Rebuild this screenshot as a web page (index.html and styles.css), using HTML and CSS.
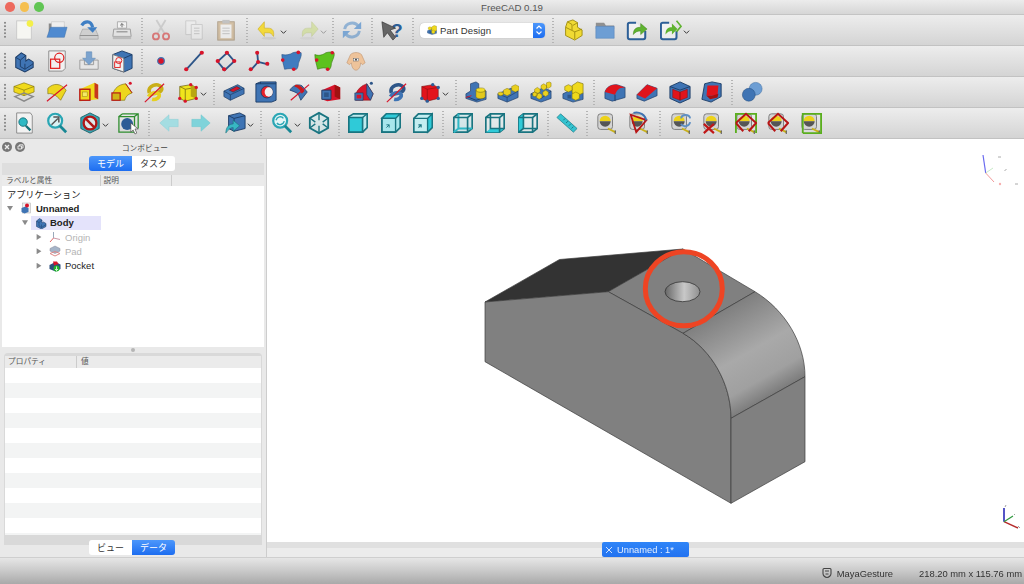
FILE: index.html
```html
<!DOCTYPE html>
<html lang="ja">
<head>
<meta charset="utf-8">
<title>FreeCAD 0.19</title>
<link rel="stylesheet" href="styles.css">
</head>
<body>
<svg class="defs" aria-hidden="true">
  <defs>
    <linearGradient id="curve" gradientUnits="userSpaceOnUse" x1="719" y1="312" x2="768" y2="398">
      <stop offset="0" stop-color="#7f7f7f"/><stop offset=".5" stop-color="#a9a9a9"/><stop offset=".8" stop-color="#a0a0a0"/><stop offset="1" stop-color="#7b7b7b"/>
    </linearGradient>
    <linearGradient id="bore" x1="0" x2="1" y1="0" y2="0">
      <stop offset="0" stop-color="#666"/><stop offset=".2" stop-color="#8a8a8a"/><stop offset=".55" stop-color="#c8c8c8"/><stop offset="1" stop-color="#8f8f8f"/>
    </linearGradient>
  </defs>
  <symbol id="new" viewBox="0 0 24 24"><rect x="4" y="2" width="16" height="20" fill="#f6f6f2" stroke="#c9c9c9"/><circle cx="18.500" cy="5" r="3.600" fill="#f4f04a"/></symbol>
  <symbol id="open" viewBox="0 0 24 24"><path d="M3 5h6l2 2h9v12H3z" fill="#8a8a8a"/><path d="M6 3h14v8H6z" fill="#eee" stroke="#bbb" stroke-width=".5"/><path d="M5 9h18l-3 11H1z" fill="#4f8ad0" stroke="#3a6da8" stroke-width=".5"/></symbol>
  <symbol id="save" viewBox="0 0 24 24"><path d="M5 11h14l3 7v4H2v-4z" fill="#cfcfcf" stroke="#999" stroke-width=".6"/><path d="M2 18h20" stroke="#8c8c8c"/><path d="M4 7c3-5 10-6 12 2" fill="none" stroke="#3f7fc4" stroke-width="3.400"/><path d="M10 9h11l-5 6z" fill="#3f7fc4"/></symbol>
  <symbol id="print" viewBox="0 0 24 24"><path d="M7 3h10v7H7z" fill="#f3f3f3" stroke="#aaa"/><path d="M3 11h18l1 8H2z" fill="#e2e2e2" stroke="#999"/><path d="M2 19h20v3H2z" fill="#bbb"/><path d="M6 14h12" stroke="#777"/><path d="M12 9V5m-2 2l2-2 2 2" stroke="#666" fill="none"/></symbol>
  <symbol id="cut" viewBox="0 0 24 24"><g opacity=".62"><path d="M7 1l9 15M17 1L8 16" stroke="#bcbcbc" stroke-width="2"/><circle cx="6.500" cy="19" r="3.300" fill="none" stroke="#d43a3a" stroke-width="2"/><circle cx="17.500" cy="19" r="3.300" fill="none" stroke="#d43a3a" stroke-width="2"/></g></symbol>
  <symbol id="copy" viewBox="0 0 24 24"><g opacity=".45" fill="#f3f3f3" stroke="#aaa"><path d="M3 2h11v15H3z"/><path d="M9 6h12v16H9z"/><path d="M12 10h6M12 13h6M12 16h6" stroke="#999"/></g></symbol>
  <symbol id="paste" viewBox="0 0 24 24"><g opacity=".6"><rect x="3" y="3" width="18" height="20" fill="#c7a77b" stroke="#8c7350"/><rect x="6" y="6" width="12" height="15" fill="#f4f4f4"/><rect x="8" y="1" width="8" height="4" fill="#aaa"/><path d="M8 10h8M8 13h8M8 16h8" stroke="#aaa"/></g></symbol>
  <symbol id="undo" viewBox="0 0 24 24"><ellipse cx="13" cy="21" rx="8" ry="1.500" fill="#ccc"/><path d="M8 10h4c5 0 7 3 6 9-2-3-3-4-6-4H8v4L1 11l7-8z" fill="#f2d93b" stroke="#c9a818" stroke-width=".6"/></symbol>
  <symbol id="redo" viewBox="0 0 24 24"><g opacity=".55"><ellipse cx="11" cy="21" rx="8" ry="1.500" fill="#ccc"/><path d="M16 10h-4c-5 0-7 3-6 9 2-3 3-4 6-4h4v4l7-8-7-8z" fill="#c9dc7c" stroke="#a8ba5c" stroke-width=".6"/></g></symbol>
  <symbol id="refresh" viewBox="0 0 24 24"><g opacity=".55" fill="none" stroke="#4f8ac6" stroke-width="3.200"><path d="M4 11c1-7 11-9 15-3"/><path d="M20 13c-1 7-11 9-15 3"/></g><path d="M22 3v8h-8zM2 21v-8h8z" fill="#7ba6d3"/></symbol>
  <symbol id="cursor" viewBox="0 0 24 24"><path d="M1 3l15 7-6 2 6 8-3 3-6-8-4 5z" fill="#666" stroke="#333" stroke-width=".7"/></symbol>
  <symbol id="part" viewBox="0 0 24 24"><path d="M7 3l6-2 5 3v5l5 3v6l-8 5-10-5v-9z" fill="#f0da33" stroke="#a08d10"/><path d="M5 9l10 5v8M15 14l8-3M7 3l5 3v6M13 7l5-3" fill="none" stroke="#a08d10"/></symbol>
  <symbol id="folder" viewBox="0 0 24 24"><path d="M2 4h9l2 3h9v4H2z" fill="#909090"/><path d="M2 8h20v13H2z" fill="#6d9ed4" stroke="#5784b8" stroke-width=".6"/></symbol>
  <symbol id="exp" viewBox="0 0 24 24"><path d="M11 4H4a2 2 0 0 0-2 2v14a2 2 0 0 0 2 2h15a2 2 0 0 0 2-2v-7" fill="#fff" fill-opacity=".5" stroke="#2d5f97" stroke-width="2.200"/><path d="M8 17c0-6 3-8 8-8V5l7 6-7 6v-4c-3 0-6 1-8 4z" fill="#5fb32f" stroke="#3c7d1b" stroke-width=".5"/></symbol>
  <symbol id="exp2" viewBox="0 0 24 24"><path d="M10 4H3a2 2 0 0 0-2 2v14a2 2 0 0 0 2 2h13a2 2 0 0 0 2-2v-7" fill="#fff" fill-opacity=".5" stroke="#2d5f97" stroke-width="2.200"/><path d="M6 17c0-6 3-8 7-8V5l6 6-6 6v-4c-3 0-5 1-7 4z" fill="#5fb32f"/><path d="M18 2l5 6-5 6" fill="none" stroke="#5fb32f" stroke-width="1.800"/></symbol>
  <symbol id="body" viewBox="0 0 24 24"><path d="M3 8l6-5 5 3v6l3-2 5 3v6l-9 5-10-5z" fill="#3f74b4" stroke="#1d3c66" stroke-width="1.100"/><path d="M3 8l5 3v7l5 3 9-6M8 11l6-5M13 21v-6" fill="none" stroke="#1d3c66"/></symbol>
  <symbol id="sketch" viewBox="0 0 24 24"><path d="M3 1h18v19l-3 3H3z" fill="#f1f1f1" stroke="#888"/><rect x="5" y="10" width="10" height="10" fill="none" stroke="#e01b1b" stroke-width="1.300"/><circle cx="14.500" cy="8.500" r="5" fill="none" stroke="#e01b1b" stroke-width="1.300"/></symbol>
  <symbol id="import" viewBox="0 0 24 24"><path d="M2 11v10h20V11h-5v5H7v-5z" fill="#e6e6e6" stroke="#999"/><path d="M9 2h6v7h4l-7 7-7-7h4z" fill="#7ba3cf" stroke="#5d87b3" stroke-width=".6"/></symbol>
  <symbol id="boxs" viewBox="0 0 24 24"><path d="M2 5l10-4 11 4v15l-9 4-12-4z" fill="#3f74b4" stroke="#1d3c66"/><path d="M2 5l12 4v15L2 20z" fill="#f1f1f1" stroke="#777"/><path d="M14 9l9-4" stroke="#1d3c66"/><rect x="4" y="13" width="6" height="6" fill="none" stroke="#e01b1b"/><circle cx="8.500" cy="11.500" r="3.300" fill="none" stroke="#e01b1b"/></symbol>
  <symbol id="point" viewBox="0 0 24 24"><circle cx="12" cy="12" r="3.600" fill="#d8142a" stroke="#3f74b4" stroke-width="1.300"/></symbol>
  <symbol id="line" viewBox="0 0 24 24"><path d="M3 22L21 2" stroke="#2d5588" stroke-width="2"/><circle cx="3.500" cy="21" r="2.300" fill="#d8142a"/><circle cx="20.500" cy="3" r="2.300" fill="#d8142a"/></symbol>
  <symbol id="rect" viewBox="0 0 24 24"><path d="M12 3l9 8-9 11-9-8z" transform="rotate(8 12 12)" fill="none" stroke="#2d5588" stroke-width="2"/><g fill="#d8142a"><circle cx="13" cy="3" r="2.300"/><circle cx="21" cy="12" r="2.300"/><circle cx="10" cy="21" r="2.300"/><circle cx="3" cy="12" r="2.300"/></g></symbol>
  <symbol id="axes" viewBox="0 0 24 24"><path d="M11 13L10 2M11 13l12 3M11 13l-8 9" stroke="#2d5588" stroke-width="2" fill="none"/><g fill="#d8142a"><circle cx="10" cy="3" r="2.200"/><circle cx="21" cy="15" r="2.200"/><circle cx="3" cy="21" r="2.200"/><circle cx="11" cy="13" r="2.200"/></g></symbol>
  <symbol id="surf" viewBox="0 0 24 24"><path d="M2 5c5 1 9 0 12-2 3-1 7-1 9 0 1 4-2 8-3 12 0 3-1 5-2 6-4-1-8-1-13 0-1-5-3-10-3-16z" fill="#3f7cc0" stroke="#2a5588" stroke-width=".7"/><g fill="#d8142a"><circle cx="20" cy="2.500" r="2"/><circle cx="3" cy="11" r="2"/><circle cx="15" cy="21" r="2"/></g></symbol>
  <symbol id="surfg" viewBox="0 0 24 24"><path d="M2 5c5 2 9 0 12-2 3-1 7-1 9 0 1 4-2 8-3 12 0 3-1 5-2 6-4-2-8-2-13 0-1-5-3-10-3-16z" fill="#5cc21e" stroke="#3a7d12" stroke-width=".7"/><g fill="#d8142a"><circle cx="21" cy="3" r="2"/><circle cx="4" cy="11" r="2"/><circle cx="16" cy="21" r="2"/></g></symbol>
  <symbol id="sheep" viewBox="0 0 24 24"><path d="M6 5c3-3 9-3 12 0l4 9-3 2-2-2c0 4-2 8-5 8s-5-4-5-8l-2 2-3-2z" fill="#eec39a" stroke="#bb8f6a" stroke-width=".6"/><rect x="9" y="9" width="6" height="3" fill="#f7f7f7" stroke="#555" stroke-width=".5"/><circle cx="12" cy="10.500" r="1" fill="#333"/></symbol>
  <symbol id="pad" viewBox="0 0 24 24"><path d="M1 6l11-4 11 4v6l-11 4-11-4z" fill="#f0da1c" stroke="#7f7210" stroke-width=".7"/><path d="M1 6l11 4 11-4M12 10v6" fill="none" stroke="#7f7210" stroke-width=".7"/><path d="M2 17l10-4 10 4-10 5z" fill="none" stroke="#888" stroke-width="1.500"/></symbol>
  <symbol id="rev" viewBox="0 0 24 24"><path d="M2 8c6-6 14-6 20 2l-6 11C11 15 6 13 2 14z" fill="#edd61e" stroke="#7f7210" stroke-width=".7"/><path d="M1 22L23 4" stroke="#d8142a" stroke-width="1.300"/></symbol>
  <symbol id="loft" viewBox="0 0 24 24"><path d="M2 9l16-7 4 2v16l-20 2z" fill="#efd91c"/><path d="M18 2l4 2v16l-4-2z" fill="#c7361f"/><rect x="2" y="9" width="11" height="12" fill="#efd91c" stroke="#b81616" stroke-width="1.500"/><rect x="5" y="12" width="5" height="5" fill="#f6ea66" stroke="#8a7a10" stroke-width=".5"/></symbol>
  <symbol id="pipe" viewBox="0 0 24 24"><path d="M2 14C4 8 8 4 16 3l7 10c-3 1-7 3-8 8l-13 0z" fill="#edd61e" stroke="#7f7210" stroke-width=".7"/><rect x="1" y="13" width="9" height="8" fill="#d0b416" stroke="#b81616" stroke-width="1.300"/><path d="M16 3l7 10" stroke="#b81616"/><circle cx="21" cy="2.500" r="1.700" fill="#d8142a"/></symbol>
  <symbol id="helix" viewBox="0 0 24 24"><path d="M7 13c-3-8 10-12 13-6 2 4-5 7-10 7" fill="none" stroke="#c9ae17" stroke-width="4"/><path d="M6 17c2-4 8-5 11-3 3 3-3 7-7 6" fill="none" stroke="#e6d020" stroke-width="4"/><path d="M2 23L23 3" stroke="#d8142a" stroke-width="1.300"/></symbol>
  <symbol id="ybox" viewBox="0 0 24 24"><path d="M3 6l12-2 6 3v12l-12 3-6-3z" fill="#f0e41c" stroke="#6f6410" stroke-width=".8"/><path d="M3 6l6 3v13M9 9l12-2" fill="none" stroke="#6f6410" stroke-width=".8"/><path d="M15 4l6 3v12l-6-2z" fill="#b9a612"/><g fill="#d8142a"><circle cx="3" cy="19" r="1.800"/><circle cx="9" cy="22" r="1.800"/><circle cx="21" cy="19" r="1.800"/><circle cx="21" cy="7" r="1.800"/><circle cx="15" cy="4" r="1.800"/></g></symbol>
  <symbol id="pock" viewBox="0 0 24 24"><path d="M1 11l15-7 7 4v6l-15 7-7-4z" fill="#3f74b4" stroke="#1d3c66" stroke-width=".8"/><path d="M1 11l7 4 15-7M8 15v6" fill="none" stroke="#1d3c66" stroke-width=".8"/><path d="M7 10l8-4 4 2-8 4z" fill="#d8142a" stroke="#222" stroke-width=".5"/></symbol>
  <symbol id="hole" viewBox="0 0 24 24"><path d="M1 3l5-2h17v20l-5 2H1z" fill="#3f74b4" stroke="#1d3c66"/><path d="M6 1v2H1M6 3h17" stroke="#1d3c66" fill="none"/><circle cx="13" cy="12" r="6.500" fill="#e6212a" stroke="#1d3c66"/><ellipse cx="15" cy="12" rx="4.500" ry="5.200" fill="#f2eeee"/></symbol>
  <symbol id="groove" viewBox="0 0 24 24"><path d="M2 10c3-5 8-7 13-5l6 7-7 9-3-7c-3-2-6-3-9-4z" fill="#3f74b4" stroke="#1d3c66" stroke-width=".8"/><path d="M8 4c4 0 8 2 10 7l-3 3c-1-4-4-7-8-8z" fill="#c91a1a"/><path d="M3 21L23 4" stroke="#d8142a" stroke-width="1.300"/></symbol>
  <symbol id="sloft" viewBox="0 0 24 24"><path d="M2 10l14-6 6 3v13l-14 2-6-2z" fill="#d8142a"/><path d="M2 10h10v10H2z" fill="#3f74b4" stroke="#1d3c66"/><rect x="4.500" y="12.500" width="5" height="5" fill="#2d5588"/><path d="M16 4l6 3v13l-6-3z" fill="#a01212"/></symbol>
  <symbol id="spipe" viewBox="0 0 24 24"><path d="M3 14C5 9 9 5 15 3l7 11-3 7H3z" fill="#d8142a" stroke="#7a1010" stroke-width=".5"/><path d="M2 13h9v8H2zM15 3l7 11-3 7-4-6z" fill="#3f74b4" stroke="#1d3c66" stroke-width=".7"/><rect x="4" y="15" width="5" height="4" fill="#d8142a"/><circle cx="20" cy="2.500" r="1.700" fill="#2d5588"/></symbol>
  <symbol id="shelix" viewBox="0 0 24 24"><path d="M7 13c-3-8 10-12 13-6 2 4-5 7-10 7" fill="none" stroke="#2d5588" stroke-width="4"/><path d="M6 17c2-4 8-5 11-3 3 3-3 7-7 6" fill="none" stroke="#3f74b4" stroke-width="4"/><path d="M2 23L23 3" stroke="#d8142a" stroke-width="1.300"/></symbol>
  <symbol id="rbox" viewBox="0 0 24 24"><path d="M3 6l12-2 6 3v12l-12 3-6-3z" fill="#e3141c" stroke="#6f1010" stroke-width=".6"/><path d="M3 6l6 3v13M9 9l12-2" fill="none" stroke="#7f1010" stroke-width=".6"/><g fill="#2d5c96"><circle cx="3" cy="19" r="1.800"/><circle cx="9" cy="22" r="1.800"/><circle cx="21" cy="19" r="1.800"/><circle cx="21" cy="7" r="1.800"/><circle cx="15" cy="4" r="1.800"/></g></symbol>
  <symbol id="pat1" viewBox="0 0 24 24"><path d="M1 14l5-3V3l6-2 3 2v5l8 3v9l-10 3-12-4z" fill="#3f74b4" stroke="#1d3c66" stroke-width=".7"/><path d="M2 17l10 4 10-3" stroke="#1d3c66" fill="none"/><ellipse cx="17" cy="10" rx="5" ry="2.500" fill="#f2de28" stroke="#7f7210" stroke-width=".5"/><path d="M12 10v7c0 3 10 3 10 0v-7c0 3-10 3-10 0z" fill="#e3c91c" stroke="#7f7210" stroke-width=".5"/><path d="M1 18l6-2" stroke="#d8142a"/></symbol>
  <symbol id="pat2" viewBox="0 0 24 24"><path d="M1 14l14-6 8 3v7l-12 5-10-4z" fill="#3f74b4" stroke="#1d3c66" stroke-width=".7"/><path d="M1 14l10 4 12-7M11 18v5" stroke="#1d3c66" fill="none" stroke-width=".7"/><g fill="#e9cf1e" stroke="#7f7210" stroke-width=".5"><path d="M7 10l4-2 4 2v4l-4 2-4-2z"/><path d="M16 6l4-2 4 2v4l-4 2-4-2z"/><ellipse cx="4" cy="14" rx="3" ry="2"/></g></symbol>
  <symbol id="pat3" viewBox="0 0 24 24"><path d="M1 14l14-7 8 4v8l-11 4-11-4z" fill="#3f74b4" stroke="#1d3c66" stroke-width=".7"/><path d="M1 14l11 5 11-8" stroke="#1d3c66" fill="none" stroke-width=".7"/><g fill="#ecd21e" stroke="#7f7210" stroke-width=".5"><path d="M5 9l3-2 3 2v3l-3 2-3-2zM12 5l3-2 3 2v3l-3 2-3-2zM18 2l3-1 2 1v4l-3 2-2-1zM7 15l3-2 3 2v3l-3 2-3-2zM14 12l3-2 3 2v3l-3 2-3-2zM3 13l2-1 3 1v3l-3 1-2-1z"/></g></symbol>
  <symbol id="pat4" viewBox="0 0 24 24"><path d="M1 14l10-5 12 4v7l-11 3-11-4z" fill="#3f74b4" stroke="#1d3c66" stroke-width=".7"/><path d="M11 5l6-4 6 2v10l-6 3-6-3z" fill="#efd91c" stroke="#7f7210" stroke-width=".7"/><path d="M3 6l4-2 4 2v4l-4 2-4-2z" fill="#efd91c" stroke="#7f7210" stroke-width=".6"/><path d="M11 14l4-2 4 2v5l-4 2-4-2z" fill="#efd91c" stroke="#7f7210" stroke-width=".6"/><rect x="6" y="15" width="4" height="4" fill="#2d5588"/></symbol>
  <symbol id="fillet" viewBox="0 0 24 24"><path d="M1 12c2-6 7-8 13-8l9 3v11L9 22l-8-3z" fill="#3f74b4" stroke="#1d3c66" stroke-width=".7"/><path d="M1 12c2-6 7-8 13-8l9 3c-7 0-9 3-11 8L1 12z" fill="#e0141c"/><path d="M12 15v7" stroke="#1d3c66"/></symbol>
  <symbol id="chamfer" viewBox="0 0 24 24"><path d="M1 15L12 4l11 4v8L9 22l-8-3z" fill="#3f74b4" stroke="#1d3c66" stroke-width=".7"/><path d="M1 15L12 4l11 4-13 11z" fill="#e0141c"/></symbol>
  <symbol id="draft" viewBox="0 0 24 24"><path d="M1 6l11-5 11 5v13l-11 5-11-5z" fill="#3f74b4" stroke="#1d3c66"/><path d="M4 9l8 3v9l-8-3zM12 12l8-3v9l-8 3z" fill="#e0141c" stroke="#7a1010" stroke-width=".5"/><path d="M1 6l11 4 11-4" fill="none" stroke="#1d3c66"/></symbol>
  <symbol id="thick" viewBox="0 0 24 24"><path d="M4 3l8-2 10 2v14l-11 6-10-3z" fill="#3f74b4" stroke="#1d3c66"/><path d="M7 5h5v11H6zM12 5h7l-1 11h-6z" fill="#e0141c"/><path d="M6 16l6 0 7-2-1 4-8 2z" fill="#a71010"/></symbol>
  <symbol id="bool" viewBox="0 0 24 24"><circle cx="16" cy="8.500" r="7" fill="#6d9ed4" stroke="#3f6ea3" stroke-width=".6"/><circle cx="8.500" cy="15" r="7" fill="#3f74b4" stroke="#234d80" stroke-width=".6"/></symbol>
  <symbol id="fit" viewBox="0 0 24 24"><path d="M4 1h15l2 3v19H4z" fill="#f2f2f2" stroke="#888"/><circle cx="11" cy="11" r="4.600" fill="#2db9c4" stroke="#16717a"/><path d="M14 15l5 5" stroke="#16717a" stroke-width="2.600"/></symbol>
  <symbol id="zoom" viewBox="0 0 24 24"><circle cx="10" cy="9.500" r="7.600" fill="#d9f2f4" stroke="#2aa6b4" stroke-width="2.400"/><path d="M15 15l7 7" stroke="#178794" stroke-width="3"/><path d="M6 14L13 7M8 5.500h6v6" fill="none" stroke="#555" stroke-width="1.600"/></symbol>
  <symbol id="block" viewBox="0 0 24 24"><path d="M12 1l10 5v12l-10 5-10-5V6z" fill="#34a9b8" stroke="#1b5e66"/><circle cx="12" cy="12" r="7" fill="#dfe8ea" stroke="#b01818" stroke-width="2.600"/><path d="M7 7l10 10" stroke="#b01818" stroke-width="2.600"/></symbol>
  <symbol id="bound" viewBox="0 0 24 24"><path d="M1 5h17v17H1zM5 2h17v16M1 5l4-3M18 5l4-3" fill="none" stroke="#2e8d2e" stroke-width="1.400"/><circle cx="10" cy="13" r="6.500" fill="#2d5c96"/><path d="M14 12v10l2.500-2.500 2 4.500 2-1-2-4.500H22z" fill="#fff" stroke="#444" stroke-width=".7"/></symbol>
  <symbol id="back" viewBox="0 0 24 24"><path d="M2 12l10-9v5h10v8H12v5z" fill="#a4dde2" stroke="#8accd2" stroke-width=".5"/></symbol>
  <symbol id="fwd" viewBox="0 0 24 24"><path d="M22 12L12 3v5H2v8h10v5z" fill="#7fd3da" stroke="#6bc3cb" stroke-width=".5"/></symbol>
  <symbol id="vmenu" viewBox="0 0 24 24"><path d="M5 4l12-3 6 3v14l-12 3-6-3z" fill="#3f74b4" stroke="#1d3c66"/><path d="M5 4l6 3v14M11 7l12-3" fill="none" stroke="#1d3c66"/><path d="M2 23c0-7 4-10 8-10V9l7 6-7 6v-4c-3 0-5 2-8 6z" fill="#38b6c4" stroke="#176c76" stroke-width=".6"/></symbol>
  <symbol id="sync" viewBox="0 0 24 24"><circle cx="10" cy="9.500" r="7.600" fill="#e5f5f6" stroke="#2aa6b4" stroke-width="2.400"/><path d="M15 15l7 7" stroke="#178794" stroke-width="3"/><path d="M5.500 9c1-4 6-5 8-2M14.500 10c-1 4-6 5-8 2" fill="none" stroke="#2aa6b4" stroke-width="1.500"/></symbol>
  <symbol id="iso" viewBox="0 0 24 24"><path d="M12 1l10 5.500v11L12 23 2 17.500v-11z" fill="#c9eef1" fill-opacity=".4" stroke="#197480" stroke-width="2"/><path d="M12 1v8M2 6.500l6 4.500M22 6.500L16 11M12 23v-8M2 17.500L8 13M22 17.500L16 13" stroke="#197480" stroke-width="1.500"/></symbol>
  <symbol id="front" viewBox="0 0 24 24"><path d="M2 5l5-3h15v15l-5 5H2z" fill="#bfeaee" stroke="#197480" stroke-width="1.800"/><path d="M2 6h15v16H2z" fill="#2fcad8" stroke="#197480" stroke-width="1.800"/><path d="M17 6l5-4" stroke="#197480" stroke-width="1.500"/></symbol>
  <symbol id="vtop" viewBox="0 0 24 24"><path d="M2 7l5-5h15v15l-5 5H2z" fill="#a8e6ec" stroke="#197480" stroke-width="1.800"/><path d="M2 7l5-5h15l-5 5z" fill="#2fcad8" stroke="#197480" stroke-width="1.500"/><path d="M2 7h15v15H2z" fill="none" stroke="#197480" stroke-width="1.500"/><path d="M7 17l3-3m-3 0h3v3" fill="none" stroke="#197480"/></symbol>
  <symbol id="vright" viewBox="0 0 24 24"><path d="M2 7l5-5h15v15l-5 5H2z" fill="#c4eef1" stroke="#197480" stroke-width="1.800"/><path d="M17 7l5-5v15l-5 5z" fill="#2fcad8" stroke="#197480" stroke-width="1.500"/><path d="M2 7h15M7 17l3-3m-3 0h3v3" fill="none" stroke="#197480" stroke-width="1.200"/></symbol>
  <symbol id="vrear" viewBox="0 0 24 24"><path d="M2 6l5-4h15v16l-5 4H2z" fill="#c9eef1" fill-opacity=".5" stroke="#197480" stroke-width="1.800"/><path d="M7 2v16h15M7 18l-5 4" fill="none" stroke="#2fb8c6" stroke-width="2.200"/><path d="M2 6h15v16M17 6l5-4" fill="none" stroke="#197480" stroke-width="1.800"/></symbol>
  <symbol id="vbot" viewBox="0 0 24 24"><path d="M2 6l5-4h15v16l-5 4H2z" fill="#e4f6f7" fill-opacity=".4" stroke="#197480" stroke-width="1.800"/><path d="M2 22l5-4h15l-5 4z" fill="#2fcad8"/><path d="M7 2v16h15M2 6h15v16M17 6l5-4" fill="none" stroke="#197480" stroke-width="1.800"/></symbol>
  <symbol id="vleft" viewBox="0 0 24 24"><path d="M2 6l5-4h15v16l-5 4H2z" fill="#e4f6f7" fill-opacity=".4" stroke="#197480" stroke-width="1.800"/><path d="M2 6l5-4v16l-5 4z" fill="#2fcad8"/><path d="M7 2v16h15M2 6h15v16M17 6l5-4M2 22l5-4" fill="none" stroke="#197480" stroke-width="1.800"/></symbol>
  <symbol id="ruler" viewBox="0 0 24 24"><path d="M1 6l4-4 18 16-4 4z" fill="#35c3d0" stroke="#197480" stroke-width=".7"/><path d="M8 9l2-2M11 12l2-2M14 15l2-2M17 18l2-2" stroke="#197480"/></symbol>
  <symbol id="tape" viewBox="0 0 24 24"><rect x="2" y="2" width="16" height="17" rx="3" fill="#d4d4d4" stroke="#777"/><path d="M4 10a6 6 0 0 1 12 0z" fill="#edd21a"/><path d="M4 10a6 6 0 0 0 12 0z" fill="#555"/><path d="M13 18l8 4" stroke="#c9b11a" stroke-width="2"/><path d="M21 20v4" stroke="#444"/></symbol>
  <symbol id="redtri" viewBox="0 0 24 24"><path d="M3 3l17 6-11 13z" fill="none" stroke="#b81616" stroke-width="2"/><path d="M6 1c6-2 13 2 14 8" fill="none" stroke="#3f74b4" stroke-width="2"/></symbol>
  <symbol id="arrows" viewBox="0 0 24 24"><g fill="none" stroke="#5e8fc4" stroke-width="2"><path d="M12 7c1-5 9-5 10 0"/><path d="M22 11c-1 5-8 6-10 2"/></g></symbol>
  <symbol id="xmark" viewBox="0 0 24 24"><path d="M2 13l11 10M13 13L2 23" stroke="#c01818" stroke-width="2.400"/></symbol>
  <symbol id="rdia" viewBox="0 0 24 24"><path d="M1 12L12 2l11 10-8 9m-6 0l-8-9" fill="none" stroke="#b81616" stroke-width="2.200"/></symbol>
  <symbol id="gfr" viewBox="0 0 24 24"><path d="M1 23V2h22v21" fill="none" stroke="#5aae1e" stroke-width="2"/></symbol>
  <symbol id="gfrb" viewBox="0 0 24 24"><path d="M3 23V2h20v21H3" fill="none" stroke="#5aae1e" stroke-width="2"/></symbol>
  <symbol id="chev" viewBox="0 0 8 6"><path d="M1 1.500l3 3 3-3" fill="none" stroke="#333" stroke-width="1.100"/></symbol>
  <symbol id="chevl" viewBox="0 0 8 6"><path d="M1 1.500l3 3 3-3" fill="none" stroke="#999" stroke-width="1.100"/></symbol>
</svg>

<div class="app">
  <header class="titlebar">
    <div class="lights"><i class="light red"></i><i class="light amber"></i><i class="light green"></i></div>
    <span class="title">FreeCAD 0.19</span>
  </header>

  <div class="toolbar">
    <i class="grip"></i>
    <span class="tool"><svg class="ico"><use href="#new"/></svg></span>
    <span class="tool"><svg class="ico"><use href="#open"/></svg></span>
    <span class="tool"><svg class="ico"><use href="#save"/></svg></span>
    <span class="tool"><svg class="ico"><use href="#print"/></svg></span>
    <i class="sep"></i>
    <span class="tool"><svg class="ico"><use href="#cut"/></svg></span>
    <span class="tool"><svg class="ico"><use href="#copy"/></svg></span>
    <span class="tool"><svg class="ico"><use href="#paste"/></svg></span>
    <i class="sep s8"></i>
    <span class="tool menu"><svg class="ico"><use href="#undo"/></svg><svg class="chev"><use href="#chev"/></svg></span>
    <span class="tool menu"><svg class="ico"><use href="#redo"/></svg><svg class="chev"><use href="#chevl"/></svg></span>
    <i class="sep s5"></i>
    <span class="tool"><svg class="ico"><use href="#refresh"/></svg></span>
    <i class="sep"></i>
    <span class="tool"><svg class="ico" viewBox="0 0 24 24"><text x="11" y="20" class="qm">?</text><use href="#cursor"/></svg></span>
    <i class="sep s9"></i>
    <div class="combo">
      <svg class="combo-ico"><use href="#pat4"/></svg>
      <span class="combo-text">Part Design</span>
      <span class="stepper"><svg viewBox="0 0 10 14" class="stepper-ico"><path d="M2.500 5.500L5 3l2.500 2.500M2.500 8.500L5 11l2.500-2.500" fill="none" stroke="#fff" stroke-width="1.200"/></svg></span>
    </div>
    <i class="sep s6"></i>
    <span class="tool"><svg class="ico"><use href="#part"/></svg></span>
    <span class="tool"><svg class="ico"><use href="#folder"/></svg></span>
    <span class="tool"><svg class="ico"><use href="#exp"/></svg></span>
    <span class="tool menu"><svg class="ico"><use href="#exp2"/></svg><svg class="chev"><use href="#chev"/></svg></span>
  </div>

  <div class="toolbar">
    <i class="grip"></i>
    <span class="tool"><svg class="ico"><use href="#body"/></svg></span>
    <span class="tool"><svg class="ico"><use href="#sketch"/></svg></span>
    <span class="tool"><svg class="ico"><use href="#import"/></svg></span>
    <span class="tool"><svg class="ico"><use href="#boxs"/></svg></span>
    <i class="sep"></i>
    <span class="tool"><svg class="ico"><use href="#point"/></svg></span>
    <span class="tool"><svg class="ico"><use href="#line"/></svg></span>
    <span class="tool"><svg class="ico"><use href="#rect"/></svg></span>
    <span class="tool"><svg class="ico"><use href="#axes"/></svg></span>
    <span class="tool"><svg class="ico"><use href="#surf"/></svg></span>
    <span class="tool"><svg class="ico"><use href="#surfg"/></svg></span>
    <span class="tool"><svg class="ico"><use href="#sheep"/></svg></span>
  </div>

  <div class="toolbar">
    <i class="grip"></i>
    <span class="tool"><svg class="ico"><use href="#pad"/></svg></span>
    <span class="tool"><svg class="ico"><use href="#rev"/></svg></span>
    <span class="tool"><svg class="ico"><use href="#loft"/></svg></span>
    <span class="tool"><svg class="ico"><use href="#pipe"/></svg></span>
    <span class="tool"><svg class="ico"><use href="#helix"/></svg></span>
    <span class="tool menu"><svg class="ico"><use href="#ybox"/></svg><svg class="chev"><use href="#chev"/></svg></span>
    <i class="sep"></i>
    <span class="tool"><svg class="ico"><use href="#pock"/></svg></span>
    <span class="tool"><svg class="ico"><use href="#hole"/></svg></span>
    <span class="tool"><svg class="ico"><use href="#groove"/></svg></span>
    <span class="tool"><svg class="ico"><use href="#sloft"/></svg></span>
    <span class="tool"><svg class="ico"><use href="#spipe"/></svg></span>
    <span class="tool"><svg class="ico"><use href="#shelix"/></svg></span>
    <span class="tool menu"><svg class="ico"><use href="#rbox"/></svg><svg class="chev"><use href="#chev"/></svg></span>
    <i class="sep"></i>
    <span class="tool"><svg class="ico"><use href="#pat1"/></svg></span>
    <span class="tool"><svg class="ico"><use href="#pat2"/></svg></span>
    <span class="tool"><svg class="ico"><use href="#pat3"/></svg></span>
    <span class="tool"><svg class="ico"><use href="#pat4"/></svg></span>
    <i class="sep s9"></i>
    <span class="tool"><svg class="ico"><use href="#fillet"/></svg></span>
    <span class="tool"><svg class="ico"><use href="#chamfer"/></svg></span>
    <span class="tool"><svg class="ico"><use href="#draft"/></svg></span>
    <span class="tool"><svg class="ico"><use href="#thick"/></svg></span>
    <i class="sep"></i>
    <span class="tool"><svg class="ico"><use href="#bool"/></svg></span>
  </div>

  <div class="toolbar">
    <i class="grip"></i>
    <span class="tool"><svg class="ico"><use href="#fit"/></svg></span>
    <span class="tool"><svg class="ico"><use href="#zoom"/></svg></span>
    <span class="tool menu"><svg class="ico"><use href="#block"/></svg><svg class="chev"><use href="#chev"/></svg></span>
    <span class="tool"><svg class="ico"><use href="#bound"/></svg></span>
    <i class="sep"></i>
    <span class="tool"><svg class="ico"><use href="#back"/></svg></span>
    <span class="tool"><svg class="ico"><use href="#fwd"/></svg></span>
    <span class="tool menu"><svg class="ico"><use href="#vmenu"/></svg><svg class="chev"><use href="#chev"/></svg></span>
    <i class="sep"></i>
    <span class="tool menu narrow"><svg class="ico"><use href="#sync"/></svg><svg class="chev"><use href="#chev"/></svg></span>
    <span class="tool"><svg class="ico"><use href="#iso"/></svg></span>
    <i class="sep"></i>
    <span class="tool"><svg class="ico"><use href="#front"/></svg></span>
    <span class="tool"><svg class="ico"><use href="#vtop"/></svg></span>
    <span class="tool"><svg class="ico"><use href="#vright"/></svg></span>
    <i class="sep"></i>
    <span class="tool"><svg class="ico"><use href="#vrear"/></svg></span>
    <span class="tool"><svg class="ico"><use href="#vbot"/></svg></span>
    <span class="tool"><svg class="ico"><use href="#vleft"/></svg></span>
    <i class="sep"></i>
    <span class="tool"><svg class="ico"><use href="#ruler"/></svg></span>
    <i class="sep"></i>
    <span class="tool"><svg class="ico"><use href="#tape"/></svg></span>
    <span class="tool"><svg class="ico"><use href="#tape"/><use href="#redtri"/></svg></span>
    <i class="sep s9"></i>
    <span class="tool"><svg class="ico"><use href="#tape"/><use href="#arrows"/></svg></span>
    <span class="tool"><svg class="ico"><use href="#tape"/><use href="#xmark"/></svg></span>
    <span class="tool"><svg class="ico"><use href="#tape"/><use href="#gfr"/><use href="#rdia"/></svg></span>
    <span class="tool"><svg class="ico"><use href="#tape"/><use href="#rdia"/></svg></span>
    <span class="tool"><svg class="ico"><use href="#tape"/><use href="#gfrb"/></svg></span>
  </div>

  <main class="main">
    <aside class="side">
      <div class="dock-head">
        <div class="dock-btns">
          <svg class="dock-btn" viewBox="0 0 10 10"><circle cx="5" cy="5" r="5" fill="#777"/><path d="M3 3l4 4M7 3L3 7" stroke="#eee" stroke-width="1.300"/></svg>
          <svg class="dock-btn" viewBox="0 0 10 10"><circle cx="5" cy="5" r="5" fill="#777"/><path d="M3 4h3.500v3H3zM4.500 4V2.800H8V6H6.500" fill="none" stroke="#eee" stroke-width=".9"/></svg>
        </div>
        <span class="dock-title">コンボビュー</span>
      </div>
      <div class="seg seg-top">
        <span class="seg-item on">モデル</span><span class="seg-item">タスク</span>
      </div>
      <section class="tree">
        <div class="th">
          <span class="th-cell c1">ラベルと属性</span><span class="th-cell c2">説明</span>
        </div>
        <div class="row root">アプリケーション</div>
        <div class="row d1"><i class="tri down"></i><span class="node"><svg class="ticon" viewBox="0 0 24 24"><rect x="5" y="2" width="16" height="20" fill="#f0f0f0" stroke="#aaa"/><path d="M3 12l8-3 6 3v8l-8 3-6-3z" fill="#3f74b4"/><circle cx="14" cy="7" r="4" fill="#d8142a"/></svg><b>Unnamed</b></span></div>
        <div class="row d2"><i class="tri down"></i><span class="node sel"><svg class="ticon" viewBox="0 0 24 24"><use href="#body"/></svg><b>Body</b></span></div>
        <div class="row d3 off"><i class="tri right"></i><span class="node"><svg class="ticon" viewBox="0 0 24 24"><path d="M9 14V2" stroke="#9ab" stroke-width="2"/><path d="M9 14l13 3" stroke="#c9a" stroke-width="2"/><path d="M9 14l-7 8" stroke="#d66" stroke-width="2"/></svg>Origin</span></div>
        <div class="row d3 off"><i class="tri right"></i><span class="node"><svg class="ticon" viewBox="0 0 24 24"><path d="M2 7l10-5 10 5v5l-10 5-10-5z" fill="#a5b4c8" stroke="#889"/><path d="M2 17l10-4 10 4-10 5z" fill="none" stroke="#d88" stroke-width="2"/></svg>Pad</span></div>
        <div class="row d3"><i class="tri right"></i><span class="node"><svg class="ticon" viewBox="0 0 24 24"><path d="M1 10l12-6 10 5v9l-10 5-12-5z" fill="#2d4f7c"/><path d="M8 3h8l3 5-9 3z" fill="#d8142a"/><circle cx="15" cy="17" r="6" fill="#21b52d"/><path d="M15 13v8m-3-3l3 3 3-3" stroke="#fff" fill="none" stroke-width="1.500"/></svg>Pocket</span></div>
      </section>
      <div class="splitter"><i class="split-dot"></i></div>
      <section class="props">
        <div class="props-inner">
          <div class="th th-props"><span class="th-cell p1">プロパティ</span><span class="th-cell p2">値</span></div>
          <div class="prow"></div><div class="prow"></div><div class="prow"></div><div class="prow"></div>
          <div class="prow"></div><div class="prow"></div><div class="prow"></div><div class="prow"></div>
          <div class="prow"></div><div class="prow"></div><div class="prow"></div><div class="prow"></div>
        </div>
      </section>
      <div class="seg seg-bottom">
        <span class="seg-item">ビュー</span><span class="seg-item on">データ</span>
      </div>
    </aside>

    <section class="work">
      <div class="canvas">
        <svg class="scene" viewBox="267 139 757 403">
          <g stroke="#3c3c3c" stroke-width=".7" stroke-linejoin="round">
            <path d="M485 302L559.500 259.500 683 249 608.300 291.700z" fill="#333"/>
            <path d="M608.300 291.700L683 249 755 291.700 683 333.300z" fill="#808080"/>
            <path d="M485 302L608.300 291.700 683 333.300C712 350 731 384 731 418.300V503.300L485 361.700z" fill="#808080"/>
            <path d="M683 333.300L755 291.700C785 310 805 343 805 376.700L731 418.300C731 384 712 350 683 333.300z" fill="url(#curve)"/>
            <path d="M731 418.300L805 376.700V461.700L731 503.300z" fill="#808080"/>
          </g>
          <ellipse cx="682.500" cy="291.700" rx="17.500" ry="10" fill="url(#bore)" stroke="#333" stroke-width=".8"/>
          <ellipse class="mark" cx="683.800" cy="288.800" rx="38.500" ry="37"/>
          <g class="axis-top">
            <path d="M983 155L985.700 173" stroke="#6a6af0" stroke-width="1.200"/>
            <path d="M985.700 173l8.300 9" stroke="#f29a9a" stroke-width="1"/>
            <path d="M985.700 173l7.300-5" stroke="#c8eac8" stroke-width="1"/>
            <circle cx="1000" cy="184" r="1.200" fill="#f6b0b0"/>
            <path d="M998 157h3M1006.500 169l-2 2M1015 184h3" stroke="#aaa" stroke-width="1"/>
          </g>
          <g class="axis-bottom">
            <path d="M1004 521.700V508" stroke="#2a2ab8" stroke-width="1.600"/>
            <path d="M1004 521.700l14 6.300" stroke="#b52a2a" stroke-width="1.400"/>
            <path d="M1004 521.700l9-5.700" stroke="#2f9a3f" stroke-width="1.200"/>
            <path d="M1005 507l1-2M1014 515l1-1M1018 526l2 2" stroke="#888" stroke-width=".8"/>
          </g>
        </svg>
      </div>
      <div class="tabbar">
        <span class="doc-tab"><svg class="doc-x" viewBox="0 0 8 8"><path d="M1 1l6 6M7 1L1 7" stroke="#cfe2ff" stroke-width="1"/></svg>Unnamed : 1*</span>
      </div>
    </section>
  </main>

  <footer class="status">
    <svg class="gesture" viewBox="0 0 10 12"><path d="M2 1.500h6a1 1 0 0 1 1 1v4c0 2-2 4-4 4s-4-2-4-4v-4a1 1 0 0 1 1-1z" fill="none" stroke="#444" stroke-width="1.100"/><path d="M3 4h4M3.500 7h3" stroke="#444"/></svg>
    <span class="gesture-label">MayaGesture</span>
    <span class="dims">218.20 mm x 115.76 mm</span>
  </footer>
</div>
</body>
</html>
```

FILE: styles.css
```css
* { box-sizing: border-box; }
html, body { margin: 0; padding: 0; height: 100%; overflow: hidden; background: #e8e8e8; }
body { font-family: "Liberation Sans", "Noto Sans CJK JP", sans-serif; color: #222; }
.defs { width: 0; height: 0; position: absolute; }

.app { width: 1024px; height: 584px; display: flex; flex-direction: column; filter: blur(.45px); }

.titlebar { height: 15px; flex: none; display: flex; align-items: center; justify-content: center; background: linear-gradient(#ececec, #d6d6d6); border-bottom: 1px solid #c4c4c4; position: relative; }
.title { font-size: 9.700px; color: #555; }
.lights { position: absolute; left: 5px; top: 2px; display: flex; gap: 5px; }
.light { width: 9.500px; height: 9.500px; border-radius: 50%; display: block; }
.red { background: #ed6a5e; }
.amber { background: #f5bf4f; }
.green { background: #61c554; }

.toolbar { height: 31px; flex: none; display: flex; align-items: center; background: linear-gradient(#ededed, #d4d4d4); border-bottom: 1px solid #c2c2c2; }
.grip { width: 8px; height: 18px; flex: none; background: radial-gradient(circle, #8c8c8c 0 .8px, transparent 1.100px) 4px 0 / 2px 3.500px repeat-y; }
.tool { width: 32.500px; height: 24px; flex: none; display: flex; align-items: center; justify-content: center; }
.tool.menu { width: 40px; justify-content: flex-start; padding-left: 6px; }
.tool.menu.narrow { width: 38px; }
.ico { width: 22px; height: 24px; flex: none; display: block; }
.chev { width: 7px; height: 6px; flex: none; margin-left: 1px; margin-top: 4px; }
.qm { font: bold 21px "Liberation Sans", sans-serif; fill: #2d5f97; }
.sep { width: 7px; height: 27px; flex: none; background: radial-gradient(circle, #b4b4b4 0 .5px, transparent .8px) center 0 / 2px 3px repeat-y; }
.s5 { width: 5.500px; }
.s6 { width: 6px; margin-left: 5px; }
.s8 { width: 8px; }
.s9 { width: 9px; }

.combo { width: 125px; height: 15px; flex: none; margin-left: 3px; display: flex; align-items: center; background: #fff; border-radius: 4px; box-shadow: 0 0 1px #999; overflow: hidden; }
.combo-ico { width: 10px; height: 10px; margin: 0 3px 0 7px; }
.combo-text { flex: 1; font-size: 9.600px; color: #333; letter-spacing: .1px; white-space: nowrap; }
.stepper { width: 12px; height: 15px; background: linear-gradient(#4c97fb, #1d6df0); display: flex; align-items: center; justify-content: center; }
.stepper-ico { width: 10px; height: 14px; }

.main { flex: 1; display: flex; min-height: 0; }

.side { width: 267px; flex: none; display: flex; flex-direction: column; background: #e9e9e9; border-right: 1px solid #cdcdcd; padding-bottom: 2px; }
.dock-head { height: 17px; flex: none; display: flex; align-items: center; justify-content: center; position: relative; padding-left: 24px; }
.dock-title { font-size: 7.700px; color: #444; }
.dock-btns { position: absolute; left: 2px; top: 3px; display: flex; gap: 2.500px; }
.dock-btn { width: 10px; height: 10px; display: block; }

.seg { height: 19px; flex: none; display: flex; justify-content: center; align-items: flex-start; padding-right: 2px; }
.seg-top { background: linear-gradient(#e9e9e9 7px, #dedede 7px); margin: 0 2px; border-radius: 3px 3px 0 0; }
.seg-item { width: 43px; height: 14.500px; display: flex; align-items: center; justify-content: center; font-size: 9px; background: #fff; color: #333; }
.seg-item:first-child { border-radius: 3px 0 0 3px; }
.seg-item:last-child { border-radius: 0 3px 3px 0; }
.seg-item.on { background: linear-gradient(#4c97fb, #1d6df0); color: #fff; }

.tree { height: 172px; flex: none; margin: 0 2px; background: #fff; }
.th { height: 11px; display: flex; background: #ebebeb; }
.th-cell { font-size: 7.700px; line-height: 11px; color: #555; padding-left: 4px; border-right: 1px solid #ccc; white-space: nowrap; overflow: hidden; }
.c1 { width: 98.500px; }
.c2 { width: 71px; padding-left: 3px; }
.row { height: 14.300px; display: flex; align-items: center; font-size: 9.500px; color: #222; }
.root { font-size: 9.200px; margin-top: 1px; padding-left: 5px; }
.d1 { padding-left: 5px; }
.d2 { padding-left: 20px; }
.d3 { padding-left: 34px; }
.off { color: #b4b4b4; }
.tri { width: 6px; height: 6px; flex: none; margin-right: 3px; background: #8a8a8a; display: block; }
.tri.down { clip-path: polygon(0 10%, 100% 10%, 50% 90%); }
.tri.right { clip-path: polygon(10% 0, 90% 50%, 10% 100%); }
.node { display: flex; align-items: center; height: 14.300px; padding-left: 4px; }
.node b { font-weight: bold; }
.sel { width: 70px; background: #e4e3fb; }
.ticon { width: 12px; height: 12px; flex: none; margin-right: 4px; }
.d2 .ticon { margin-right: 3px; }

.splitter { height: 6px; flex: none; display: flex; align-items: center; justify-content: center; }
.split-dot { width: 4px; height: 4px; border-radius: 50%; background: #b5b5b5; display: block; }

.props { height: 182px; flex: none; margin: 0 4px; width: 258px; padding: 3px 1px 0; background: #d9d9d9; border-radius: 4px 4px 0 0; }
.props-inner { height: 179px; background: #fff; overflow: hidden; }
.th-props { height: 12px; }
.p1 { width: 72px; padding-left: 3px; line-height: 12px; }
.p2 { flex: 1; border-right: 0; line-height: 12px; }
.prow { height: 15px; background: #fff; }
.prow:nth-child(odd) { background: #f3f4f4; }

.seg-bottom { height: 21px; width: 258px; margin: 0 4px; padding-top: 5px; background: linear-gradient(#d9d9d9 10px, transparent 10px); }

.work { flex: 1; min-width: 0; display: flex; flex-direction: column; }
.canvas { flex: 1; min-height: 0; background: #fff; }
.scene { width: 100%; height: 100%; display: block; }
.mark { fill: none; stroke: #ee4423; stroke-width: 5; }

.tabbar { height: 15px; flex: none; display: flex; padding-left: 335px; background: linear-gradient(#e0e0e0 6px, #ececec 6px); }
.doc-tab { width: 87px; height: 15px; display: flex; align-items: center; padding-left: 3px; background: linear-gradient(#2f85f8, #2272f0); border-radius: 2px; color: #e3eeff; font-size: 9.300px; white-space: nowrap; }
.doc-x { width: 8px; height: 8px; margin-right: 4px; flex: none; }

.status { height: 27px; flex: none; display: flex; align-items: center; justify-content: flex-end; padding: 4px 2px 0 0; background: linear-gradient(#e6e6e6, #c9c9c9 50%, #a9a9a9); border-top: 1px solid #cfcfcf; font-size: 9.400px; color: #333; }
.gesture { width: 10px; height: 12px; margin-right: 5px; }
.gesture-label { margin-right: 26px; }
```
